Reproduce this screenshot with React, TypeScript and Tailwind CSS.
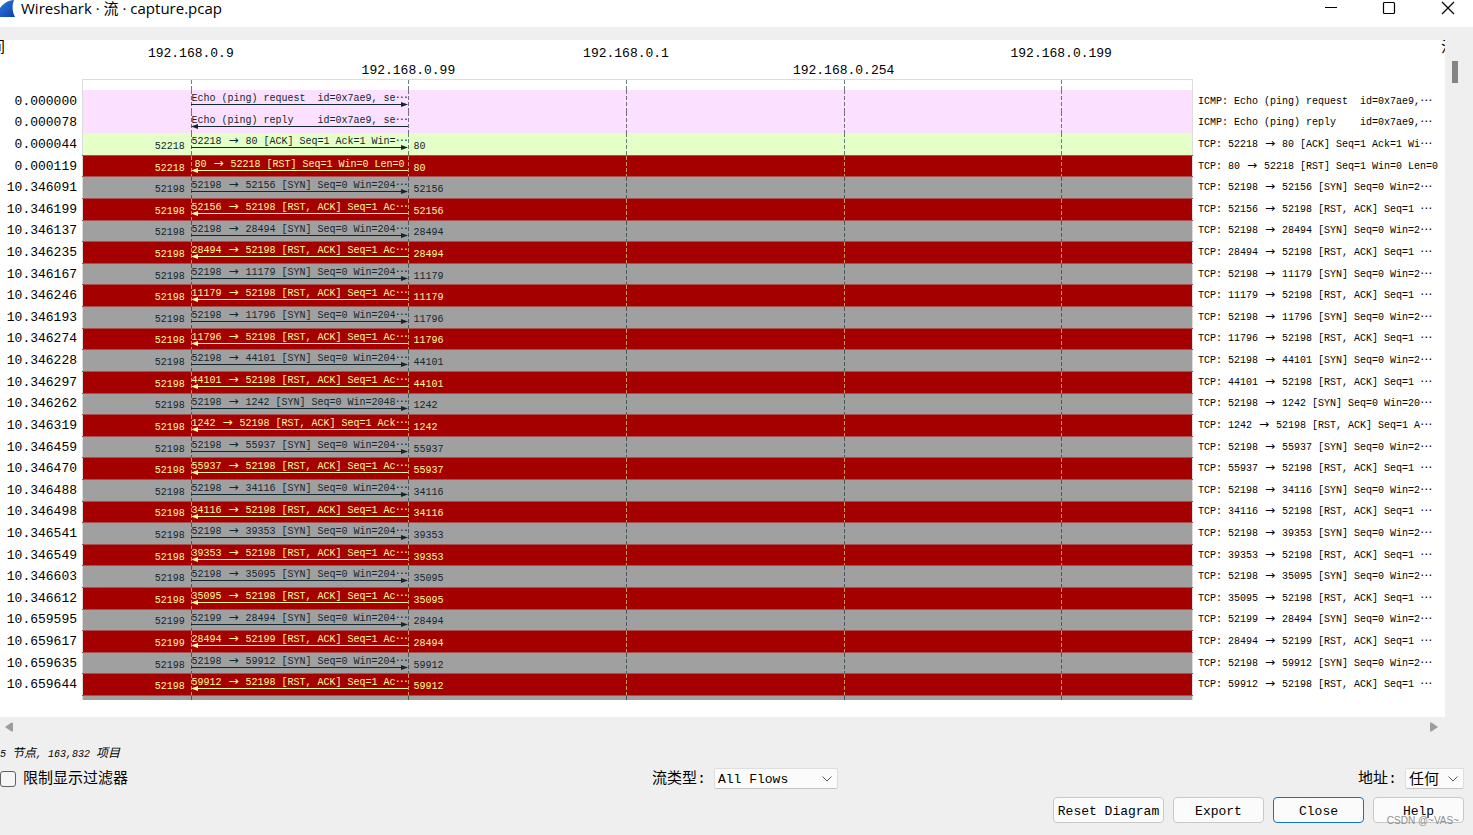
import React from 'react';
import clsx from 'clsx';

type Tone = 'icmp' | 'ack' | 'rst' | 'syn';

interface Flow {
  time: string;
  tone: Tone;
  back?: boolean;
  left?: string;
  right?: string;
  label: string;
  comment: string;
}

const TONES: Record<Tone, string> = {
  icmp: 'bg-[#fce0ff] text-[#12272e]',
  ack: 'bg-[#e4ffc7] text-[#12272e]',
  rst: 'bg-[#a40000] text-[#fffc9c] border-t border-[#a75050]',
  syn: 'bg-[#a0a0a0] text-[#12272e] border-t border-[#a75050]',
};

const NODES = ['192.168.0.9', '192.168.0.99', '192.168.0.1', '192.168.0.254', '192.168.0.199'];

const syn = (time: string, src: string, dst: string): Flow => ({
  time,
  tone: 'syn',
  left: src,
  right: dst,
  label: `${src} → ${dst} [SYN] Seq=0 Win=${dst.length === 4 ? '2048' : '204'}⋯`,
  comment: `TCP: ${src} → ${dst} [SYN] Seq=0 Win=${dst.length === 4 ? '20' : '2'}⋯`,
});

const rst = (time: string, src: string, dst: string): Flow => ({
  time,
  tone: 'rst',
  back: true,
  left: src,
  right: dst,
  label: `${dst} → ${src} [RST, ACK] Seq=1 ${dst.length === 4 ? 'Ack' : 'Ac'}⋯`,
  comment: `TCP: ${dst} → ${src} [RST, ACK] Seq=1 ${dst.length === 4 ? 'A' : ''}⋯`,
});

const FLOWS: Flow[] = [
  {
    time: '0.000000',
    tone: 'icmp',
    label: 'Echo (ping) request  id=0x7ae9, se⋯',
    comment: 'ICMP: Echo (ping) request  id=0x7ae9,⋯',
  },
  {
    time: '0.000078',
    tone: 'icmp',
    back: true,
    label: 'Echo (ping) reply    id=0x7ae9, se⋯',
    comment: 'ICMP: Echo (ping) reply    id=0x7ae9,⋯',
  },
  {
    time: '0.000044',
    tone: 'ack',
    left: '52218',
    right: '80',
    label: '52218 → 80 [ACK] Seq=1 Ack=1 Win=⋯',
    comment: 'TCP: 52218 → 80 [ACK] Seq=1 Ack=1 Wi⋯',
  },
  {
    time: '0.000119',
    tone: 'rst',
    back: true,
    left: '52218',
    right: '80',
    label: '80 → 52218 [RST] Seq=1 Win=0 Len=0',
    comment: 'TCP: 80 → 52218 [RST] Seq=1 Win=0 Len=0',
  },
  syn('10.346091', '52198', '52156'),
  rst('10.346199', '52198', '52156'),
  syn('10.346137', '52198', '28494'),
  rst('10.346235', '52198', '28494'),
  syn('10.346167', '52198', '11179'),
  rst('10.346246', '52198', '11179'),
  syn('10.346193', '52198', '11796'),
  rst('10.346274', '52198', '11796'),
  syn('10.346228', '52198', '44101'),
  rst('10.346297', '52198', '44101'),
  syn('10.346262', '52198', '1242'),
  rst('10.346319', '52198', '1242'),
  syn('10.346459', '52198', '55937'),
  rst('10.346470', '52198', '55937'),
  syn('10.346488', '52198', '34116'),
  rst('10.346498', '52198', '34116'),
  syn('10.346541', '52198', '39353'),
  rst('10.346549', '52198', '39353'),
  syn('10.346603', '52198', '35095'),
  rst('10.346612', '52198', '35095'),
  syn('10.659595', '52199', '28494'),
  rst('10.659617', '52199', '28494'),
  syn('10.659635', '52198', '59912'),
  rst('10.659644', '52198', '59912'),
];

const MONO = "font-['Liberation_Mono','Noto_Sans_CJK_SC',monospace]";
const DASH =
  'bg-[repeating-linear-gradient(to_bottom,currentColor_0_4px,transparent_4px_6px)] bg-[length:1px_100%] bg-no-repeat';
const SIDES = 'shadow-[inset_1px_0_#dcdcdc,inset_-1px_0_#dcdcdc]';

// Arrows and ellipses take two columns of the monospace grid
const Wide: React.FC<{ text: string }> = ({ text }) => (
  <>
    {text.split(/([→⋯])/).map((part, i) =>
      part === '→' || part === '⋯' ? (
        <span key={i} className="inline-block w-3 text-center font-['DejaVu_Sans',sans-serif] text-xs leading-none">
          {part}
        </span>
      ) : (
        part
      ),
    )}
  </>
);

const Arrow: React.FC<{ back?: boolean }> = ({ back }) => (
  <div className={clsx('-mt-[3px] flex items-center', back && 'flex-row-reverse')}>
    <span className="h-px flex-1 bg-current" />
    <svg viewBox="0 0 7 7" className="h-[7px] w-[7px]" fill="currentColor">
      {back ? <path d="M0 3.5 7 1v5z" /> : <path d="M7 3.5 0 1v5z" />}
    </svg>
  </div>
);

const GuideLines: React.FC = () => (
  <>
    {NODES.map((node) => (
      <span key={node} className="grid grid-cols-2 text-[#12272e]/60">
        <span className={clsx('col-start-2', DASH)} />
      </span>
    ))}
  </>
);

const FlowRow: React.FC<{ flow: Flow }> = ({ flow }) => {
  const dash = clsx(DASH, flow.tone === 'rst' ? 'text-[#cf9850]' : 'text-[#12272e]/60');
  const ink = flow.tone === 'rst' ? 'text-[#fffc9c]' : 'text-[#12272e]';

  return (
    <div className="flex min-h-0">
      <time className="flex w-[82px] shrink-0 items-center justify-end pt-[2px] pr-[5px] text-[13px] leading-4">
        {flow.time}
      </time>
      <div className={clsx('grid flex-1 grid-cols-10 pr-[23px] text-[10px] leading-3', SIDES, TONES[flow.tone])}>
        <span className="flex items-center justify-end pt-[5px] pr-[6px]">{flow.left}</span>
        <div className={clsx('col-span-2', dash)}>
          <div className={clsx('pt-px', ink)}>
            <p className="h-[13px] text-center leading-[14px] whitespace-pre">
              <Wide text={flow.label} />
            </p>
            <Arrow back={flow.back} />
          </div>
        </div>
        <div className={dash}>
          <span className={clsx('flex h-full items-center pt-[5px] pl-[5px]', ink)}>{flow.right}</span>
        </div>
        <span className={clsx('col-start-6', dash)} />
        <span className={clsx('col-start-8', dash)} />
        <span className={clsx('col-start-10', dash)} />
      </div>
      <p className="flex w-[252px] shrink-0 items-center pl-[5px] text-[10px] leading-3 whitespace-pre">
        <span>
          <Wide text={flow.comment} />
        </span>
      </p>
    </div>
  );
};

const TitleBar: React.FC = () => (
  <header className="flex h-[27px] shrink-0 items-start justify-between bg-white font-['Open_Sans','Noto_Sans_CJK_SC',sans-serif]">
    <div className="flex items-start">
      <svg viewBox="0 0 16 18" className="h-[18px] w-4">
        <defs>
          <linearGradient id="fin" x1="0" y1="0" x2="1" y2="1">
            <stop offset="0" stopColor="#2f7be0" />
            <stop offset="1" stopColor="#0b3fa8" />
          </linearGradient>
        </defs>
        <path d="M0 8C3 4 8 0 14 0c-2 5-2 11 1 17H0z" fill="url(#fin)" />
      </svg>
      <h1 className="pl-[5px] text-[15px] leading-4">Wireshark · 流 · capture.pcap</h1>
    </div>
    <div className="flex gap-[34px] pr-[13px]">
      <button aria-label="Minimize" className="h-4 w-6">
        <svg viewBox="0 0 24 16" className="h-4 w-6" stroke="#000">
          <path d="M5 7.5h12" />
        </svg>
      </button>
      <button aria-label="Maximize" className="h-4 w-6">
        <svg viewBox="0 0 24 16" className="h-4 w-6" stroke="#000" strokeWidth="1.2" fill="none">
          <rect x="5.5" y="2.5" width="11" height="11" rx="1" />
        </svg>
      </button>
      <button aria-label="Close window" className="h-4 w-6">
        <svg viewBox="0 0 24 16" className="h-4 w-6" stroke="#000" strokeWidth="1.2">
          <path d="M6 2l12 12M18 2 6 14" />
        </svg>
      </button>
    </div>
  </header>
);

const Diagram: React.FC = () => (
  <main className="flex flex-1 flex-col bg-white pb-[17px]">
    <div className="flex h-[39px] shrink-0">
      <div className="w-[82px] shrink-0 text-[15px] leading-[18px]">
        <span className="flex w-[5px] justify-end overflow-hidden">间</span>
      </div>
      <div className="grid flex-1 grid-cols-5 pr-[23px] text-center text-[13px] leading-[18px]">
        {NODES.map((node, i) => (
          <span key={node} className={i % 2 ? 'pt-[22px]' : 'pt-[5px]'}>
            {node}
          </span>
        ))}
      </div>
      <div className="flex w-[252px] shrink-0 justify-end text-[15px] leading-[18px]">
        <span className="w-1 overflow-hidden">注</span>
      </div>
    </div>

    <div className="flex h-[11px] shrink-0">
      <div className="w-[82px] shrink-0" />
      <div className={clsx('grid flex-1 grid-cols-5 border-t border-[#dcdcdc] pr-[23px]', SIDES)}>
        <GuideLines />
      </div>
      <div className="w-[252px] shrink-0" />
    </div>

    <div className="grid flex-1 auto-rows-fr">
      {FLOWS.map((flow) => (
        <FlowRow key={flow.time} flow={flow} />
      ))}
    </div>

    <div className="flex h-[5px] shrink-0">
      <div className="w-[82px] shrink-0" />
      <div className={clsx('grid flex-1 grid-cols-5 border-t border-[#a75050] bg-[#a0a0a0] pr-[23px]', SIDES)}>
        <GuideLines />
      </div>
      <div className="w-[252px] shrink-0" />
    </div>
  </main>
);

interface PickerProps {
  id: string;
  label: string;
  value: string;
  className: string;
}

const Picker: React.FC<PickerProps> = ({ id, label, value, className }) => (
  <div className="flex items-center">
    <label htmlFor={id} className="pt-[2px] pr-2 text-[15px] leading-[19px]">
      {label}
    </label>
    <div
      className={clsx(
        'grid h-[21px] items-center rounded-xs border border-[#dedede] border-b-[#c4c4c4] bg-[#fbfbfb]',
        className,
      )}
    >
      <select id={id} className="col-start-1 row-start-1 h-[19px] w-full appearance-none bg-transparent pt-px pl-[3px]">
        <option>{value}</option>
      </select>
      <svg
        viewBox="0 0 10 6"
        className="pointer-events-none col-start-1 row-start-1 mr-[5px] h-[6px] w-[10px] justify-self-end"
        fill="none"
        stroke="#5a5a5a"
      >
        <path d="M.5.5 5 5 9.5.5" />
      </svg>
    </div>
  </div>
);

const BUTTON = 'h-[26px] rounded-sm border bg-[#fbfbfb] pt-[3px] text-[13px]';

const App: React.FC = () => (
  <div className={clsx('flex min-h-screen flex-col bg-[#efefef] text-black', MONO)}>
    <TitleBar />

    <div className="flex flex-1 pt-[13px]">
      <Diagram />
      <div className="w-7 shrink-0 pt-[21px] pl-[7px]">
        <div className="h-[22px] w-[6px] bg-[#858585]" />
      </div>
    </div>

    <footer className="shrink-0 pb-3">
      <div className="flex h-5 items-center justify-between pr-[35px] pl-[5px]">
        <button aria-label="Scroll left">
          <svg viewBox="0 0 8 10" className="h-[10px] w-2" fill="#9d9d9d">
            <path d="M0 5 6.5.5Q8 0 8 1.5V8.5Q8 10 6.5 9.5z" />
          </svg>
        </button>
        <button aria-label="Scroll right">
          <svg viewBox="0 0 8 10" className="h-[10px] w-2" fill="#9d9d9d">
            <path d="M8 5 1.5.5Q0 0 0 1.5V8.5Q0 10 1.5 9.5z" />
          </svg>
        </button>
      </div>

      <p className="pt-2 text-[10px] leading-5 italic">
        5 <span className="text-xs">节点</span>, 163,832 <span className="text-xs">项目</span>
      </p>

      <div className="flex items-center justify-between pt-[3px] pr-[9px] text-[13px]">
        <label className="flex items-center gap-[7px] text-[15px] leading-[19px]">
          <input type="checkbox" className="size-4 appearance-none rounded-[3px] border border-[#626262] bg-[#f5f5f5]" />
          <span className="pt-[2px]">限制显示过滤器</span>
        </label>
        <div className="pl-1">
          <Picker id="flow-type" label="流类型:" value="All Flows" className="w-[124px]" />
        </div>
        <Picker id="address" label="地址:" value="任何" className="w-[59px] text-[15px]" />
      </div>

      <div className="relative flex justify-end gap-[9px] pt-2 pr-[9px]">
        <button className={clsx(BUTTON, 'w-[111px] border-[#c8c8c8]')}>Reset Diagram</button>
        <button className={clsx(BUTTON, 'w-[91px] border-[#c8c8c8]')}>Export</button>
        <button className={clsx(BUTTON, 'w-[91px] border-[#0f74c8]')}>Close</button>
        <button className={clsx(BUTTON, 'w-[91px] border-[#c8c8c8]')}>Help</button>
        <span className="pointer-events-none absolute right-[14px] -bottom-1 font-['Liberation_Sans',sans-serif] text-[10px] leading-3 text-[#8f8f8f]">
          CSDN @~VAS~
        </span>
      </div>
    </footer>
  </div>
);

export default App;
